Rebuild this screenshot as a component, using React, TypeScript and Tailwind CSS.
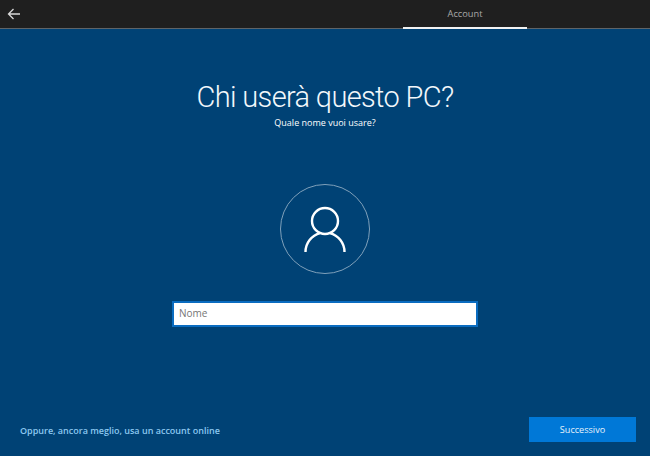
export default function App() {
  return (
    <div className="w-[650px] h-[456px] flex flex-col bg-[#004275] overflow-hidden font-['Open_Sans','Noto_Sans',sans-serif] text-white">
      <header className="h-[29px] shrink-0 flex bg-[#1f1f1f] border-b border-[#5f6468]">
        <button className="w-[28px] h-[28px] flex items-center justify-center text-[#d8d8d8]">
          <svg width="14" height="12" viewBox="0 0 14 12" fill="none" stroke="currentColor" strokeWidth="1.3">
            <path d="M13 6H1.5M6.500 1 1.5 6l5 5" />
          </svg>
        </button>
        <div className="ml-[375px] w-[124px] h-[29px] -mb-px flex items-center justify-center border-b-2 border-[#f2f2f2] text-[9.25px] text-[#a8a8a8]">
          Account
        </div>
      </header>
      <main className="flex-1 flex flex-col items-center">
        <h1 className="mt-[49px] h-[38px] font-['Roboto',sans-serif] text-[29px] leading-[38px] tracking-[-0.65px] font-light text-[#f2f7fb]">Chi userà questo PC?</h1>
        <p className="text-[9px] leading-[14px] font-medium">Quale nome vuoi usare?</p>
        <div className="mt-[54px] w-[90px] h-[90px] rounded-full border border-[#7fa0ba] flex items-center justify-center">
          <svg width="44" height="48" viewBox="0 0 44 48" fill="none" stroke="white" strokeWidth="2.4" className="mt-[2px]">
            <circle cx="22" cy="15" r="13" />
            <path d="M2.500 46A19.500 19.500 0 0 1 17.200 27.100M26.800 27.100A19.500 19.500 0 0 1 41.500 46" />
          </svg>
        </div>
        <div className="mt-[27px] w-[306px] h-[26px] bg-white border-2 border-[#0a6cc0] flex items-center px-[5px] pb-[1px] text-[10px] text-[#767676]">
          Nome
        </div>
      </main>
      <footer className="h-[39px] shrink-0 flex items-start justify-between pl-[20px] pr-[14px]">
        <a className="mt-[7px] text-[9px] leading-[14px] font-semibold text-[#8cc8f0]">Oppure, ancora meglio, usa un account online</a>
        <button className="w-[107px] h-[25px] bg-[#0078d7] text-[9.1px] text-[#e6f2fb]">Successivo</button>
      </footer>
    </div>
  );
}
